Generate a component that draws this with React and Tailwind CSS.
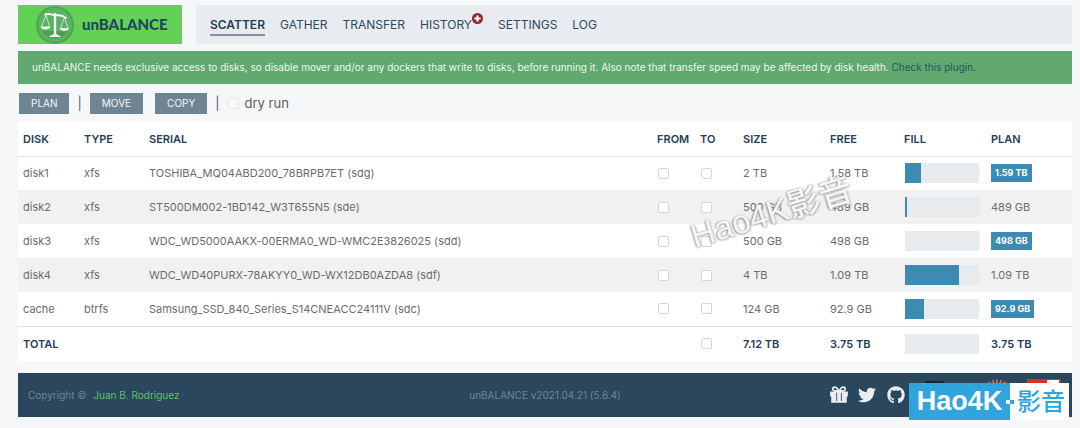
import { FaTwitter, FaGithub } from 'react-icons/fa';

const disks = [
  { name: 'disk1', type: 'xfs', serial: 'TOSHIBA_MQ04ABD200_78BRPB7ET (sdg)', size: '2 TB', free: '1.58 TB', fill: 21, plan: '1.59 TB', changed: true },
  { name: 'disk2', type: 'xfs', serial: 'ST500DM002-1BD142_W3T655N5 (sde)', size: '500 GB', free: '489 GB', fill: 2.5, plan: '489 GB', changed: false },
  { name: 'disk3', type: 'xfs', serial: 'WDC_WD5000AAKX-00ERMA0_WD-WMC2E3826025 (sdd)', size: '500 GB', free: '498 GB', fill: 0, plan: '498 GB', changed: true },
  { name: 'disk4', type: 'xfs', serial: 'WDC_WD40PURX-78AKYY0_WD-WX12DB0AZDA8 (sdf)', size: '4 TB', free: '1.09 TB', fill: 73, plan: '1.09 TB', changed: false },
  { name: 'cache', type: 'btrfs', serial: 'Samsung_SSD_840_Series_S14CNEACC24111V (sdc)', size: '124 GB', free: '92.9 GB', fill: 25, plan: '92.9 GB', changed: true },
];

const Logo = () => (
  <svg viewBox="0 0 38 38" className="h-[38px] w-[38px]" aria-hidden="true">
    <circle cx="19" cy="19" r="19" fill="#4ba650" />
    <circle cx="19" cy="19" r="17" fill="#5bb262" />
    <path d="M6 25 A15 15 0 0 0 32 25 Z" fill="#4d9f55" />
    <g fill="none" stroke="#f2fbf2" strokeLinecap="round" strokeLinejoin="round">
      <path d="M9 8.5 C13 7 15 9 19 9 S26 9 30 12" strokeWidth="1.8" />
      <path d="M19 8 V29" strokeWidth="2.4" />
      <path d="M10 9 L5.5 20.5 M10 9 L13.5 20.5 M28.5 11.5 L24.5 22 M28.5 11.5 L32 22" strokeWidth="0.7" />
    </g>
    <path
      d="M4.5 20.5 H14.5 C13.5 24.5 5.5 24.5 4.5 20.5Z M23.5 22 H33 C32 26 24.5 26 23.5 22Z M13 31 C14 29 17 29.5 17.5 28 H20.5 C21 29.5 24 29 25 31Z"
      fill="#f2fbf2"
    />
  </svg>
);

const GiftIcon = () => (
  <svg viewBox="0 0 18 16" className="h-[18px] w-5" fill="currentColor" aria-hidden="true">
    <path
      fillRule="evenodd"
      d="M1 4.8 H5.5 C3.5 4.8 2.6 3.7 2.6 2.5 C2.6 1.2 3.6 0.2 5 0.2 C7 0.2 8 1.7 9 3.2 C10 1.7 11 0.2 13 0.2 C14.4 0.2 15.4 1.2 15.4 2.5 C15.4 3.7 14.5 4.8 12.5 4.8 H17 V9.3 H16 V15 H2 V9.3 H1Z M5 1.6 C3.9 1.6 3.9 3.5 5 3.5 H7.5 C6.8 2.3 6 1.6 5 1.6Z M13 1.6 C12 1.6 11.2 2.3 10.5 3.5 H13 C14.1 3.5 14.1 1.6 13 1.6Z M6.5 6 V13.5 H7.3 V6Z M10.7 6 V13.5 H11.5 V6Z"
    />
  </svg>
);

const SunIcon = () => (
  <svg viewBox="0 0 20 20" className="h-5 w-5" aria-hidden="true">
    <path
      d="M10 0.8 V5 M6 1.5 L7 5 M14 1.5 L13 5 M2 3 L5 6.5 M18 3 L15 6.5"
      stroke="#bd7757"
      strokeWidth="1.6"
      strokeLinecap="round"
    />
    <circle cx="10" cy="13" r="5" fill="#bd7757" />
  </svg>
);

const Check = ({ label, faint }) => (
  <input
    type="checkbox"
    aria-label={label}
    className={
      faint
        ? 'block h-[11px] w-[11px] appearance-none rounded-[2px] border border-[#e6e7e8] bg-[#fafafa] checked:bg-[#3d8ab3]'
        : 'block h-[11px] w-[11px] appearance-none rounded-[2px] border border-[#d6d6d6] bg-white checked:bg-[#3d8ab3]'
    }
  />
);

const Fill = ({ value }) => (
  <div className="h-5 w-[74px] bg-[#e8ebee]">
    <div className="h-full bg-[#3d8ab3]" style={{ width: `${value}%` }} />
  </div>
);

const NavLink = ({ children, active }) => (
  <a
    href="#"
    className={
      active
        ? 'border-b-2 border-[#8393a3] pt-[3px] pb-px font-semibold text-[#234058]'
        : 'border-b-2 border-transparent pt-[3px] pb-px'
    }
  >
    {children}
  </a>
);

const ActionButton = ({ children }) => (
  <button type="button" className="h-[21px] bg-[#708594] px-3 text-[10px] text-[#f3f6f8]">
    {children}
  </button>
);

const Header = () => (
  <header className="flex h-[39px] gap-[14px]">
    <a href="#" className="flex w-[164px] items-center bg-[#62d156] pl-[18px]">
      <Logo />
      <span className="ml-2 font-['Lato'] text-[15px] font-black text-[#20475a]">unBALANCE</span>
    </a>
    <nav className="flex flex-1 items-center gap-[15px] bg-[#e8ebef] px-[14px] text-[12px] leading-[17px] text-[#2f4a60]">
      <NavLink active>SCATTER</NavLink>
      <NavLink>GATHER</NavLink>
      <NavLink>TRANSFER</NavLink>
      <div className="flex items-start">
        <NavLink>HISTORY</NavLink>
        <svg viewBox="0 0 10 10" className="h-[11px] w-[11px]" aria-hidden="true">
          <circle cx="5" cy="5" r="5" fill="#9b2528" />
          <path d="M5 2.2V7.8M2.2 5H7.8" stroke="#fff" strokeWidth="2" />
        </svg>
      </div>
      <NavLink>SETTINGS</NavLink>
      <NavLink>LOG</NavLink>
    </nav>
  </header>
);

const DiskTable = () => (
  <table className="mt-2 w-full table-fixed border-collapse bg-white text-left text-[11px] leading-4 text-[#6c6c6c]">
    <colgroup>
      <col className="w-[61px]" />
      <col className="w-[65px]" />
      <col />
      <col className="w-[43px]" />
      <col className="w-[43px]" />
      <col className="w-[87px]" />
      <col className="w-[74px]" />
      <col className="w-[87px]" />
      <col className="w-[86px]" />
    </colgroup>
    <thead className="text-[#234058]">
      <tr className="h-[34px] border-b border-[#e0e2e4]">
        {['DISK', 'TYPE', 'SERIAL', 'FROM', 'TO', 'SIZE', 'FREE', 'FILL', 'PLAN'].map((title) => (
          <th key={title} className="pl-[5px] font-semibold">{title}</th>
        ))}
      </tr>
    </thead>
    <tbody>
      {disks.map((disk) => (
        <tr key={disk.name} className="h-[34px] even:bg-[#f1f1f1]">
          <td className="pl-[5px]">{disk.name}</td>
          <td className="pl-[5px]">{disk.type}</td>
          <td className="pl-[5px]">{disk.serial}</td>
          <td className="pl-[6px]"><Check label={`From ${disk.name}`} /></td>
          <td className="pl-[6px]"><Check label={`To ${disk.name}`} /></td>
          <td className="pl-[5px]">{disk.size}</td>
          <td className="pl-[5px]">{disk.free}</td>
          <td className="pl-[6px]"><Fill value={disk.fill} /></td>
          <td className="pl-[5px]">
            {disk.changed ? (
              <span className="inline-block bg-[#3d8ab3] px-1 text-[9px] leading-[18px] font-bold text-white">
                {disk.plan}
              </span>
            ) : (
              disk.plan
            )}
          </td>
        </tr>
      ))}
    </tbody>
    <tfoot className="font-semibold text-[#234058]">
      <tr className="h-[35px] border-t border-[#e0e2e4]">
        <td className="pl-[5px]" colSpan={4}>TOTAL</td>
        <td className="pl-[6px]"><Check label="To all disks" /></td>
        <td className="pl-[5px]">7.12 TB</td>
        <td className="pl-[5px]">3.75 TB</td>
        <td className="pl-[6px]"><Fill value={0} /></td>
        <td className="pl-[5px]">3.75 TB</td>
      </tr>
    </tfoot>
  </table>
);

const Footer = () => (
  <footer className="mt-3 grid h-11 grid-cols-3 items-center bg-[#2a475e] text-[10px] text-[#708594]">
    <div className="pl-[10px]">
      Copyright © <a href="#" className="ml-1 text-[#5fc168]">Juan B. Rodriguez</a>
    </div>
    <div className="text-center">unBALANCE v2021.04.21 (5.6.4)</div>
    <div className="flex items-center justify-end pr-[11px] text-[18px] text-[#e8eef4]">
      <a href="#" aria-label="Gift" className="mr-[9px]"><GiftIcon /></a>
      <a href="#" aria-label="Twitter" className="mr-[11px]"><FaTwitter /></a>
      <a href="#" aria-label="GitHub" className="mr-5"><FaGithub /></a>
      <span className="mr-[43px] h-7 w-[19px] rounded-[2px] bg-[#16222e]" />
      <span className="mr-5 self-start"><SunIcon /></span>
      <span className="flex h-8 w-[34px] justify-end bg-[#d8302f] pt-px pr-[2px]">
        <span className="h-5 w-3 bg-white" />
      </span>
    </div>
  </footer>
);

export default function App() {
  return (
    <div className="relative min-h-screen bg-[#f5f7f9] pt-[5px] pr-2 pl-[18px] font-['Inter','Noto_Sans_CJK_SC',sans-serif]">
      <Header />
      <p className="mt-[7px] bg-[#61a96f] px-[14px] py-2 text-[10px] leading-[17px] text-[#eef8f0]">
        unBALANCE needs exclusive access to disks, so disable mover and/or any dockers that write to disks, before
        running it. Also note that transfer speed may be affected by disk health.{' '}
        <a href="#" className="text-[#2a5360]">Check this plugin.</a>
      </p>
      <div className="mt-[9px] flex h-[21px] items-center pl-px text-[13px] text-[#606060]">
        <ActionButton>PLAN</ActionButton>
        <span className="mx-2">|</span>
        <ActionButton>MOVE</ActionButton>
        <span className="w-3" />
        <ActionButton>COPY</ActionButton>
        <span className="mx-2">|</span>
        <label className="flex items-center gap-[6px]">
          <Check faint />
          dry run
        </label>
      </div>
      <DiskTable />
      <Footer />
      <div className="pointer-events-none absolute top-[193px] left-[688px] -rotate-[17deg] font-['Liberation_Sans','Noto_Sans_CJK_SC',sans-serif] text-[33px] leading-[40px] font-medium whitespace-nowrap text-[#f6f6f6] [text-shadow:-1px_0_2px_#888,1px_1px_2px_#bbb]">
        Hao4K影音
      </div>
      <div className="absolute top-[383px] right-[11px] flex h-[37px] items-center font-['Liberation_Sans','Noto_Sans_CJK_SC',sans-serif] text-[27px] leading-[37px]">
        <span className="flex h-full w-[101px] items-center justify-center bg-[#2fa4dd] font-bold text-white">Hao4K</span>
        <span className="flex h-full w-[59px] items-center bg-white text-[24px] font-medium text-[#2fa4dd]">
          <span className="-ml-1 h-1 w-1 bg-white" />
          <span className="mr-[3px] h-1 w-1 bg-[#2fa4dd]" />
          影音
        </span>
      </div>
    </div>
  );
}
